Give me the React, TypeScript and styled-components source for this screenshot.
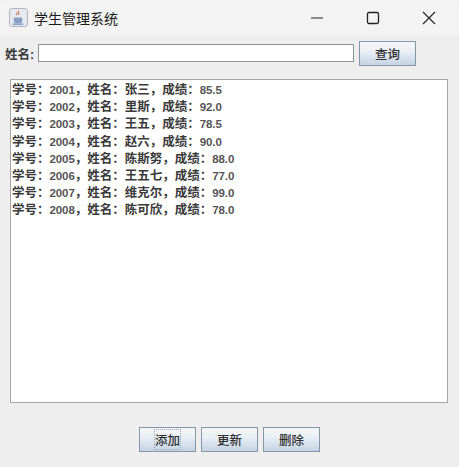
import React from 'react';
import styled, { createGlobalStyle } from 'styled-components';

const Global = createGlobalStyle`
  html, body { margin: 0; padding: 0; background: #f0f0f0; }
  #root { width: 459px; height: 467px; }
`;
const cjk = `"Liberation Sans", "Noto Sans CJK SC", sans-serif`;

const Window = styled.div`
  width: 459px; height: 467px; display: flex; flex-direction: column;
  background: #eeeeee; border-radius: 8px 8px 0 0; overflow: hidden;
  font-family: ${cjk}; box-sizing: border-box;
`;
const TitleBar = styled.div`
  height: 35px; flex: none; display: flex; align-items: center;
  background: #f3f3f3; padding: 0 2px 0 9px;
`;
const AppIcon = styled.svg`width: 19px; height: 19px; flex: none;`;
const Title = styled.div`
  margin-left: 6px; font-size: 14px; color: #1a1a1a; flex: 1;
  font-family: "Noto Sans CJK SC", sans-serif;
`;
const Caps = styled.div`display: flex; align-items: center;`;
const Cap = styled.div`
  width: 56px; height: 35px; display: flex; align-items: center; justify-content: center;
  svg { width: 14px; height: 14px; }
`;
const SearchRow = styled.div`
  display: flex; align-items: center; height: 32px; flex: none; padding: 0 0 0 5px; margin-top: 2px;
`;
const Label = styled.div`
  font-size: 12.5px; font-weight: 700; color: #3a3a3a; width: 33px; flex: none; white-space: nowrap;
`;
const Field = styled.div`
  width: 316px; height: 18px; box-sizing: border-box; flex: none;
  background: #fff; border: 1px solid #8f9499;
`;
const JButton = styled.div<{ $focus?: boolean }>`
  width: 57px; height: 25px; box-sizing: border-box; flex: none;
  display: flex; align-items: center; justify-content: center;
  border: 1px solid #8496a8;
  background: linear-gradient(#f4f7fa 0%, #e9eff5 40%, #c4d3e3 100%);
  font-size: 12.5px; font-weight: 500; color: #2f2f2f;
`;
const QueryButton = styled(JButton)`margin-left: 5px;`;
const FocusText = styled.span`outline: 1px dotted #9aa7b5; outline-offset: 0;`;
const TextArea = styled.div`
  margin: 10px 11px 0 10px; height: 324px; flex: none; box-sizing: border-box;
  background: #fff; border: 1px solid #a6a6a6; padding: 2px 0 0 1px;
`;
const Line = styled.div`
  height: 17.2px; line-height: 17.2px; font-size: 12.5px; font-weight: 700; color: #3a3a3a; white-space: nowrap;
`;
const Num = styled.span`font-size: 11.5px; letter-spacing: -0.1px; color: #555;`;
const Footer = styled.div`
  display: flex; justify-content: flex-start; gap: 5px; padding: 24px 0 0 139px;
`;

const rows: [string, string, string][] = [
  ['2001', '张三', '85.5'], ['2002', '里斯', '92.0'], ['2003', '王五', '78.5'], ['2004', '赵六', '90.0'],
  ['2005', '陈斯努', '88.0'], ['2006', '王五七', '77.0'], ['2007', '维克尔', '99.0'], ['2008', '陈可欣', '78.0'],
];

export default function App() {
  return (
    <Window>
      <Global />
      <TitleBar>
        <AppIcon viewBox="0 0 20 20">
          <rect x="0.5" y="0.5" width="19" height="19" rx="3" fill="#e6e9f2" stroke="#a8adb8" />
          <path d="M10 3c-1 2 1 2 0 4M8 5c-.6 1 .6 1.5 0 2.5" stroke="#c8763a" strokeWidth="1.2" fill="none" />
          <path d="M5 10h9v3a3 3 0 0 1-3 3H8a3 3 0 0 1-3-3z" fill="#8a9ec4" />
          <path d="M4 17h11" stroke="#6f86b4" strokeWidth="1.3" />
        </AppIcon>
        <Title>学生管理系统</Title>
        <Caps>
          <Cap>
            <svg viewBox="0 0 14 14"><path d="M1 7h12" stroke="#222" strokeWidth="1.2" /></svg>
          </Cap>
          <Cap>
            <svg viewBox="0 0 14 14"><rect x="1.5" y="1.5" width="11" height="11" rx="1.5" fill="none" stroke="#222" strokeWidth="1.3" /></svg>
          </Cap>
          <Cap>
            <svg viewBox="0 0 14 14"><path d="M1 1l12 12M13 1L1 13" stroke="#222" strokeWidth="1.1" /></svg>
          </Cap>
        </Caps>
      </TitleBar>
      <SearchRow>
        <Label>姓名:</Label>
        <Field />
        <QueryButton>查询</QueryButton>
      </SearchRow>
      <TextArea>
        {rows.map(([id, name, score]) => (
          <Line key={id}>
            学号：<Num>{id}</Num>，姓名：{name}，成绩：<Num>{score}</Num>
          </Line>
        ))}
      </TextArea>
      <Footer>
        <JButton><FocusText>添加</FocusText></JButton>
        <JButton>更新</JButton>
        <JButton>删除</JButton>
      </Footer>
    </Window>
  );
}
